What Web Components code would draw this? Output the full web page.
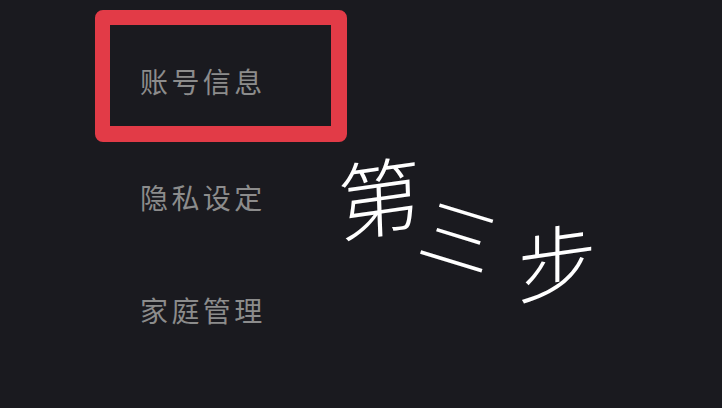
<!DOCTYPE html>
<html lang="zh">
<head>
<meta charset="utf-8">
<style>
  html, body { margin: 0; height: 100%; background: #1a1a1f; overflow: hidden; }
  body { font-family: "Noto Sans CJK SC", "Liberation Sans", sans-serif; }
</style>
</head>
<body>
<settings-screen>
  <settings-item selected>账号信息</settings-item>
  <settings-item>隐私设定</settings-item>
  <settings-item>家庭管理</settings-item>
  <step-note slot="note"></step-note>
</settings-screen>

<script>
class SettingsScreen extends HTMLElement {
  constructor() {
    super();
    this.attachShadow({ mode: "open" });
    this.shadowRoot.innerHTML = `
      <style>
        :host { display: block; position: relative; width: 722px; height: 408px; background: #1a1a1f; overflow: hidden; }
        .menu { display: flex; flex-direction: column; width: 252px; padding: 10px 0 0 95px; }
      </style>
      <div class="menu"><slot></slot></div>
      <slot name="note"></slot>
    `;
  }
}

class SettingsItem extends HTMLElement {
  constructor() {
    super();
    this.attachShadow({ mode: "open" });
    this.shadowRoot.innerHTML = `
      <style>
        :host { display: flex; align-items: center; box-sizing: border-box; height: 113px; padding: 0 0 4px 45px; color: #8c8c8c; font-size: 28px; letter-spacing: 3.4px; line-height: 1; font-weight: 400; }
        :host([selected]) { height: 132px; padding: 11px 0 0 30px; border: solid #e23b47; border-width: 15px 16px 16px 15px; border-radius: 8px; }
      </style>
      <slot></slot>
    `;
  }
}

class StepNote extends HTMLElement {
  constructor() {
    super();
    this.attachShadow({ mode: "open" });
    this.shadowRoot.innerHTML = `
      <style>
        :host { display: block; position: absolute; inset: 0; color: #fff; font-weight: 300; line-height: 1; pointer-events: none; }
        span { position: absolute; display: block; }
        .a { left: 337px; top: 152px; font-size: 84px; transform: rotate(-8deg) skewX(-6deg); }
        .b { left: 423px; top: 196px; font-size: 74px; transform: rotate(17deg); }
        .c { left: 517px; top: 218px; font-size: 80px; transform: rotate(-8deg) skewX(-8deg); }
      </style>
      <span class="a">第</span>
      <span class="b">三</span>
      <span class="c">步</span>
    `;
  }
}

customElements.define("settings-screen", SettingsScreen);
customElements.define("settings-item", SettingsItem);
customElements.define("step-note", StepNote);
</script>
</body>
</html>
